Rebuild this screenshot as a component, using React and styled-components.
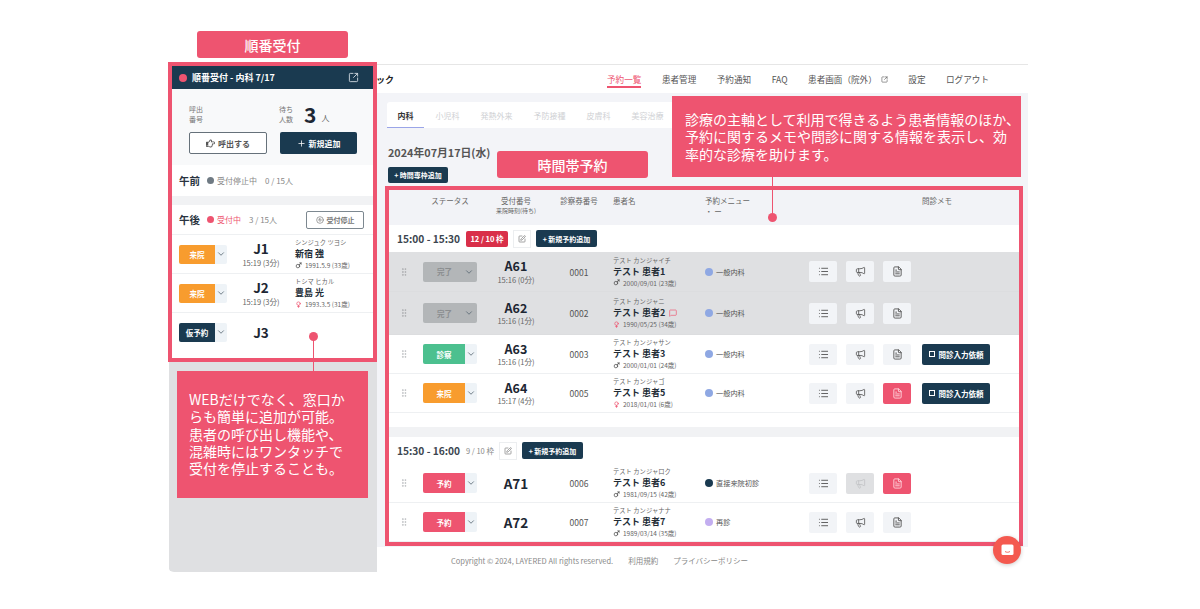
import styled, { createGlobalStyle } from "styled-components";
import {
  ChevronDown,
  CircleStop,
  FileText,
  GripVertical,
  List,
  Mars,
  Megaphone,
  MessageSquare,
  Plus,
  SquareArrowOutUpRight,
  SquarePen,
  Venus,
} from "lucide-react";
import { FaRegHandPointRight } from "react-icons/fa";

const PINK = "#ee5470";
const NAVY = "#1a3a50";

const navItems = ["予約一覧", "患者管理", "予約通知", "FAQ", "患者画面（院外）", "設定", "ログアウト"];
const tabs = ["内科", "小児科", "発熱外来", "予防接種", "皮膚科", "美容治療"];

const queue = [
  { status: "来院", color: "#f89c2e", no: "J1", time: "15:19 (3分)", kana: "シンジュク ツヨシ", name: "新宿 強", gender: "m", dob: "1991.5.9 (33歳)" },
  { status: "来院", color: "#f89c2e", no: "J2", time: "15:19 (3分)", kana: "トシマ ヒカル", name: "豊島 光", gender: "f", dob: "1993.3.5 (31歳)" },
  { status: "仮予約", color: NAVY, no: "J3" },
];

const firstSlot = [
  { status: "完了", done: true, no: "A61", time: "15:16 (0分)", card: "0001", kana: "テスト カンジャイチ", name: "テスト 患者1", gender: "m", dob: "2000/09/01 (23歳)", menu: "一般内科", dot: "#8fa8e3", h: 40 },
  { status: "完了", done: true, no: "A62", time: "15:16 (1分)", card: "0002", kana: "テスト カンジャニ", name: "テスト 患者2", note: true, gender: "f", dob: "1990/05/25 (34歳)", menu: "一般内科", dot: "#8fa8e3", h: 43 },
  { status: "診察", color: "#4cc08f", no: "A63", time: "15:16 (1分)", card: "0003", kana: "テスト カンジャサン", name: "テスト 患者3", gender: "m", dob: "2000/01/01 (24歳)", menu: "一般内科", dot: "#8fa8e3", ask: true, h: 39 },
  { status: "来院", color: "#f89c2e", no: "A64", time: "15:17 (4分)", card: "0005", kana: "テスト カンジャゴ", name: "テスト 患者5", gender: "f", dob: "2018/01/01 (6歳)", menu: "一般内科", dot: "#8fa8e3", ask: true, docOn: true, h: 39 },
];

const secondSlot = [
  { status: "予約", color: PINK, no: "A71", card: "0006", kana: "テスト カンジャロク", name: "テスト 患者6", gender: "m", dob: "1981/09/15 (42歳)", menu: "直接来院初診", dot: NAVY, docOn: true, callOff: true, h: 39 },
  { status: "予約", color: PINK, no: "A72", card: "0007", kana: "テスト カンジャナナ", name: "テスト 患者7", gender: "m", dob: "1989/03/14 (35歳)", menu: "再診", dot: "#c3aef0", h: 39 },
];

const Global = createGlobalStyle`
  * { box-sizing: border-box; }
  body {
    margin: 0;
    background: #fff;
    font-family: "Noto Sans CJK JP", "Noto Sans", sans-serif;
  }
`;

const Stage = styled.div`
  position: relative;
  width: 1200px;
  height: 609px;
  overflow: hidden;
  display: flex;
  align-items: flex-start;
  padding: 62px 0 0 168px;
`;

/* left column */
const SideColumn = styled.div`
  width: 209px;
  height: 510px;
  background: linear-gradient(to right, transparent 1px, #dfe0e2 1px);
  border-bottom-left-radius: 6px;
`;

const QueuePanel = styled.section`
  height: 300px;
  border: 4px solid ${PINK};
  background: #fff;
  overflow: hidden;
`;

const PanelHead = styled.header`
  height: 23px;
  background: ${NAVY};
  color: #fff;
  display: flex;
  align-items: center;
  padding: 0 14px 0 7px;
  font-size: 9px;
  font-weight: 700;
  gap: 5px;
  svg { margin-left: auto; color: #cfd8df; }
`;

const Dot = styled.i`
  display: inline-block;
  flex: none;
  width: ${(p) => p.$size || 7}px;
  height: ${(p) => p.$size || 7}px;
  border-radius: 50%;
  background: ${(p) => p.$color};
`;

const CallBox = styled.div`
  height: 76px;
  background: #f8f9fa;
  padding: 10px 16px 0 17px;
`;

const CallInfo = styled.div`
  display: flex;
  align-items: center;
  height: 30px;
`;

const SmallLabel = styled.div`
  width: ${(p) => p.$w}px;
  font-size: 7px;
  line-height: 10px;
  color: #777;
`;

const BigCount = styled.strong`
  font-size: 21px;
  line-height: 26px;
  color: #1d2733;
  margin-left: 1px;
  margin-right: 5px;
`;

const CountUnit = styled.span`
  font-size: 8px;
  color: #666;
  margin-top: 6px;
`;

const CallActions = styled.div`
  display: flex;
  justify-content: space-between;
  margin-top: 3px;
`;

const OutlineButton = styled.button`
  width: 78px;
  height: 22px;
  border: 1px solid #66717a;
  border-radius: 2px;
  background: #fff;
  color: #555;
  font: 700 8px "Noto Sans CJK JP", sans-serif;
  display: flex;
  align-items: center;
  justify-content: center;
  gap: 3px;
  padding: 0;
`;

const FillButton = styled(OutlineButton)`
  width: 77px;
  border: 0;
  background: ${NAVY};
  color: #fff;
`;

const SessionRow = styled.div`
  height: ${(p) => p.$h}px;
  display: flex;
  align-items: center;
  padding: 0 9px 0 7px;
  background: #fff;
  font-size: 8px;
  color: #888;
  gap: 3px;
`;

const SessionName = styled.strong`
  font-size: 10.5px;
  color: #2a3440;
  margin-right: 4px;
`;

const SessionState = styled.span`
  color: ${(p) => p.$color};
  margin-right: 5px;
`;

const Band = styled.div`
  height: ${(p) => p.$h}px;
  background: #f1f2f4;
`;

const StopButton = styled.button`
  margin-left: auto;
  width: 58px;
  height: 18px;
  border: 1px solid #7d8890;
  border-radius: 2px;
  background: #fff;
  color: #777;
  font: 700 7px "Noto Sans CJK JP", sans-serif;
  display: flex;
  align-items: center;
  justify-content: center;
  gap: 3px;
  padding: 0;
`;

const QueueRow = styled.div`
  height: ${(p) => p.$h || 39}px;
  display: flex;
  align-items: center;
  padding-left: 7px;
  border-top: 1px solid #eef0f2;
  background: #fff;
`;

const StatusGroup = styled.div`
  flex: none;
  width: ${(p) => p.$w}px;
  height: ${(p) => p.$hgt || 19}px;
  display: flex;
  border-radius: 2px;
  overflow: hidden;
  background: ${(p) => (p.$done ? "#b3b6b8" : "#eef3f7")};
`;

const StatusLabel = styled.span`
  flex: 1;
  display: flex;
  align-items: center;
  justify-content: center;
  background: ${(p) => p.$color || "transparent"};
  color: ${(p) => (p.$done ? "#8a8d8f" : "#fff")};
  font-size: 7.5px;
  font-weight: 700;
  padding-left: ${(p) => (p.$done ? "3px" : 0)};
`;

const StatusChevron = styled.span`
  flex: none;
  width: 12px;
  display: flex;
  align-items: center;
  justify-content: center;
  margin-right: ${(p) => (p.$done ? "2px" : 0)};
  color: #5c6a75;
`;

const QueueNumber = styled.div`
  width: 68px;
  flex: none;
  text-align: center;
`;

const NumberText = styled.div`
  font-size: ${(p) => p.$size}px;
  line-height: ${(p) => p.$size + 3}px;
  font-weight: 700;
  color: #1d2733;
`;

const TimeText = styled.div`
  font-size: 7.5px;
  line-height: 11px;
  color: #666;
`;

const Patient = styled.div`
  flex: none;
`;

const Kana = styled.div`
  font-size: 6.3px;
  line-height: 9px;
  color: #666;
  white-space: nowrap;
`;

const PatientName = styled.div`
  display: flex;
  align-items: center;
  gap: 4px;
  font-size: 9px;
  line-height: 13px;
  font-weight: 700;
  color: #222c36;
  white-space: nowrap;
`;

const Birth = styled.div`
  display: flex;
  align-items: center;
  gap: 3px;
  font-size: 6.5px;
  line-height: 10px;
  color: #666;
  white-space: nowrap;
`;

/* right column */
const AppColumn = styled.div`
  width: 651px;
  padding-top: 2px;
`;

const TopNav = styled.nav`
  height: 29px;
  border-top: 1px solid #e6e6e6;
  display: flex;
  align-items: center;
  font-size: 8.6px;
  color: #555;
  padding-right: 39px;
`;

const Brand = styled.strong`
  font-size: 9px;
  color: #222;
  margin: 0 auto 0 -1px;
`;

const NavItem = styled.span`
  height: 28px;
  display: flex;
  align-items: center;
  gap: 4px;
  margin-left: 20.5px;
  white-space: nowrap;
  color: ${(p) => (p.$active ? PINK : "#555")};
  box-shadow: ${(p) => (p.$active ? `inset 0 -5px 0 #fff, inset 0 -7px 0 ${PINK}` : "none")};
`;

const Workspace = styled.main`
  height: 454px;
  background: #f3f4f8;
  padding: 9px 5px 0 8px;
`;

const TabBar = styled.div`
  width: 330px;
  height: 26px;
  margin-left: 2px;
  background: #fff;
  border-radius: 3px;
  display: flex;
  font-size: 8px;
`;

const Tab = styled.span`
  flex: none;
  padding: 0 10.5px;
  display: flex;
  align-items: center;
  white-space: nowrap;
  font-weight: ${(p) => (p.$active ? 700 : 400)};
  color: ${(p) => (p.$active ? "#333" : "#cfd1d4")};
  box-shadow: ${(p) => (p.$active ? "inset 0 -1px 0 #9aa5e8" : "none")};
  margin-right: ${(p) => (p.$active ? "1px" : "0")};
`;

const DateTitle = styled.h2`
  margin: 15px 0 0 3px;
  height: 18px;
  font-size: 10.8px;
  line-height: 18px;
  font-weight: 700;
  color: #555;
`;

const AddSlotButton = styled.button`
  display: block;
  margin: 6px 0 3px 3px;
  width: 60px;
  height: 16px;
  border: 0;
  border-radius: 2px;
  background: ${NAVY};
  color: #fff;
  font: 700 7px "Noto Sans CJK JP", sans-serif;
  padding: 0;
`;

const ScheduleFrame = styled.section`
  width: 638px;
  height: 360px;
  border: 4px solid ${PINK};
  background: #fff;
  overflow: hidden;
`;

const TableHead = styled.div`
  height: 35px;
  background: #f2f3f7;
  display: flex;
  align-items: flex-start;
  padding-top: 5px;
  font-size: 7.5px;
  color: #666;
  line-height: 11px;
`;

const HeadCell = styled.div`
  flex: none;
  width: ${(p) => p.$w}px;
  text-align: ${(p) => p.$align || "center"};
  white-space: nowrap;
  small { display: block; font-size: 6px; line-height: 9px; }
`;

const SlotHead = styled.div`
  height: ${(p) => p.$h}px;
  display: flex;
  align-items: center;
  padding-left: 8px;
  background: #fff;
  gap: 5px;
`;

const SlotTime = styled.strong`
  font-size: 10.2px;
  color: #3c4650;
  width: 64px;
  white-space: nowrap;
`;

const FullBadge = styled.span`
  width: 42px;
  height: 16px;
  border-radius: 2px;
  background: #d92f49;
  color: #fff;
  font-size: 7.5px;
  font-weight: 700;
  display: flex;
  align-items: center;
  justify-content: center;
`;

const SlotCount = styled.span`
  width: 28px;
  font-size: 7.5px;
  color: #888;
  white-space: nowrap;
`;

const EditBox = styled.span`
  width: 18px;
  height: 18px;
  border: 1px solid #eceef0;
  background: #fff;
  color: #777;
  display: flex;
  align-items: center;
  justify-content: center;
`;

const AddPatientButton = styled(AddSlotButton)`
  margin: 0;
  width: 61px;
  height: 17px;
`;

const Row = styled.div`
  height: ${(p) => p.$h}px;
  display: flex;
  align-items: center;
  background: ${(p) => (p.$done ? "#dfe0e2" : "#fff")};
  border-bottom: 1px solid ${(p) => (p.$done ? "#dcdddf" : "#eef0f2")};
`;

const Handle = styled.span`
  flex: none;
  width: 34px;
  padding-left: 10px;
  color: ${(p) => (p.$done ? "#a9abad" : "#b9bcbf")};
  display: flex;
`;

const RowNumber = styled.div`
  flex: none;
  width: 78px;
  text-align: center;
`;

const CardNo = styled.div`
  flex: none;
  width: 48px;
  margin-right: 10px;
  text-align: center;
  font-size: 8.5px;
  color: #555;
`;

const PatientCell = styled.div`
  flex: none;
  width: 92px;
`;

const MenuCell = styled.div`
  flex: none;
  width: 104px;
  display: flex;
  align-items: center;
  gap: 3px;
  font-size: 7.2px;
  color: #555;
  white-space: nowrap;
`;

const Actions = styled.div`
  display: flex;
  align-items: center;
  gap: 9px;
`;

const ActionButton = styled.span`
  width: 28px;
  height: 21px;
  border-radius: 2px;
  display: flex;
  align-items: center;
  justify-content: center;
  background: ${(p) => (p.$on ? PINK : p.$off ? "#dfe0e2" : "#f2f4f7")};
  color: ${(p) => (p.$on ? "#ffd5dd" : p.$off ? "#c2c4c6" : "#555")};
`;

const AskButton = styled.span`
  width: 68px;
  height: 21px;
  margin-left: 2px;
  border-radius: 2px;
  background: ${NAVY};
  color: #fff;
  font-size: 7.5px;
  font-weight: 700;
  display: flex;
  align-items: center;
  justify-content: center;
  gap: 4px;
  white-space: nowrap;
`;

const AskCheck = styled.i`
  width: 6px;
  height: 6px;
  border: 1px solid #fff;
`;

const Footer = styled.footer`
  height: 26px;
  display: flex;
  align-items: center;
  padding-left: 74px;
  gap: 15px;
  font-size: 7.5px;
  color: #888;
  white-space: nowrap;
`;

/* annotations lying over the screen */
const TagLabel = styled.div`
  position: absolute;
  left: ${(p) => p.$x}px;
  top: ${(p) => p.$y}px;
  width: 151px;
  height: 27px;
  border-radius: 3px;
  background: ${PINK};
  color: #fff;
  font-size: 14px;
  font-weight: 500;
  display: flex;
  align-items: center;
  justify-content: center;
`;

const Callout = styled.div`
  position: absolute;
  background: ${PINK};
  color: #fff;
  white-space: nowrap;
  font-size: 14px;
  line-height: 17.3px;
`;

const TopCallout = styled(Callout)`
  left: 672px;
  top: 96px;
  width: 349px;
  height: 81px;
  padding: 15px 0 0 13px;
`;

const SideCallout = styled(Callout)`
  left: 177px;
  top: 371px;
  width: 191px;
  height: 127px;
  padding: 20px 0 0 12px;
`;

const Leader = styled.i`
  position: absolute;
  left: ${(p) => p.$x}px;
  top: ${(p) => p.$y}px;
  width: 1px;
  height: ${(p) => p.$h}px;
  background: ${PINK};
  &::after {
    content: "";
    position: absolute;
    left: -4px;
    ${(p) => (p.$dotEnd ? "bottom: -4px;" : "top: -4px;")}
    width: 9px;
    height: 9px;
    border-radius: 50%;
    background: ${PINK};
  }
`;

const ChatFab = styled.div`
  position: absolute;
  left: 993px;
  top: 536px;
  width: 28px;
  height: 28px;
  border-radius: 50%;
  background: #f4594f;
  box-shadow: 0 1px 4px rgba(0, 0, 0, 0.2);
  display: flex;
  align-items: center;
  justify-content: center;
`;

function Gender({ type }) {
  return type === "m" ? <Mars size={7} color="#444" strokeWidth={2.4} /> : <Venus size={7} color={PINK} strokeWidth={2.4} />;
}

function Status({ row, width, height }) {
  return (
    <StatusGroup $w={width} $hgt={height} $done={row.done}>
      <StatusLabel $color={row.color} $done={row.done}>{row.status}</StatusLabel>
      <StatusChevron $done={row.done}><ChevronDown size={10} strokeWidth={2} /></StatusChevron>
    </StatusGroup>
  );
}

function ScheduleRow({ row }) {
  return (
    <Row $h={row.h} $done={row.done}>
      <Handle $done={row.done}><GripVertical size={10} /></Handle>
      <Status row={row} width={54} height={20} />
      <RowNumber>
        <NumberText $size={row.time ? 12.5 : 13.5}>{row.no}</NumberText>
        {row.time && <TimeText>{row.time}</TimeText>}
      </RowNumber>
      <CardNo>{row.card}</CardNo>
      <PatientCell>
        <Kana>{row.kana}</Kana>
        <PatientName>
          {row.name}
          {row.note && <MessageSquare size={8} color={PINK} />}
        </PatientName>
        <Birth><Gender type={row.gender} />{row.dob}</Birth>
      </PatientCell>
      <MenuCell><Dot $color={row.dot} $size={8} />{row.menu}</MenuCell>
      <Actions>
        <ActionButton><List size={11} strokeWidth={2} /></ActionButton>
        <ActionButton $off={row.callOff}><Megaphone size={11} strokeWidth={1.8} /></ActionButton>
        <ActionButton $on={row.docOn}><FileText size={11} strokeWidth={2} /></ActionButton>
        {row.ask && <AskButton><AskCheck />問診入力依頼</AskButton>}
      </Actions>
    </Row>
  );
}

export default function App() {
  return (
    <Stage>
      <Global />
      <SideColumn>
        <QueuePanel>
          <PanelHead>
            <Dot $color="#ee5470" $size={8} />
            順番受付 - 内科 7/17
            <SquareArrowOutUpRight size={11} />
          </PanelHead>
          <CallBox>
            <CallInfo>
              <SmallLabel $w={90}>呼出<br />番号</SmallLabel>
              <SmallLabel $w={24}>待ち<br />人数</SmallLabel>
              <BigCount>3</BigCount>
              <CountUnit>人</CountUnit>
            </CallInfo>
            <CallActions>
              <OutlineButton><FaRegHandPointRight size={9} />呼出する</OutlineButton>
              <FillButton><Plus size={9} />新規追加</FillButton>
            </CallActions>
          </CallBox>
          <SessionRow $h={31}>
            <SessionName>午前</SessionName>
            <Dot $color="#6f7a83" />
            <SessionState $color="#888">受付停止中</SessionState>
            0 / 15人
          </SessionRow>
          <Band $h={9} />
          <SessionRow $h={29}>
            <SessionName>午後</SessionName>
            <Dot $color={PINK} />
            <SessionState $color={PINK}>受付中</SessionState>
            3 / 15人
            <StopButton><CircleStop size={8} />受付停止</StopButton>
          </SessionRow>
          {queue.map((item) => (
            <QueueRow key={item.no}>
              <Status row={item} width={48} />
              <QueueNumber>
                <NumberText $size={13.5}>{item.no}</NumberText>
                {item.time && <TimeText>{item.time}</TimeText>}
              </QueueNumber>
              {item.kana && (
                <Patient>
                  <Kana>{item.kana}</Kana>
                  <PatientName>{item.name}</PatientName>
                  <Birth><Gender type={item.gender} />{item.dob}</Birth>
                </Patient>
              )}
            </QueueRow>
          ))}
        </QueuePanel>
      </SideColumn>

      <AppColumn>
        <TopNav>
          <Brand>ック</Brand>
          {navItems.map((item, i) => (
            <NavItem key={item} $active={i === 0}>
              {item}
              {item.startsWith("患者画面") && <SquareArrowOutUpRight size={7} />}
            </NavItem>
          ))}
        </TopNav>
        <Workspace>
          <TabBar>
            {tabs.map((tab, i) => (
              <Tab key={tab} $active={i === 0}>{tab}</Tab>
            ))}
          </TabBar>
          <DateTitle>2024年07月17日(水)</DateTitle>
          <AddSlotButton>+ 時間専枠追加</AddSlotButton>
          <ScheduleFrame>
            <TableHead>
              <HeadCell $w={34} />
              <HeadCell $w={54}>ステータス</HeadCell>
              <HeadCell $w={78}>受付番号<small>来院時刻(待ち)</small></HeadCell>
              <HeadCell $w={48}>診察券番号</HeadCell>
              <HeadCell $w={10} />
              <HeadCell $w={92} $align="left">患者名</HeadCell>
              <HeadCell $w={217} $align="left">予約メニュー<br />・ ー</HeadCell>
              <HeadCell $w={40} $align="left">問診メモ</HeadCell>
            </TableHead>
            <SlotHead $h={27}>
              <SlotTime>15:00 - 15:30</SlotTime>
              <FullBadge>12 / 10 枠</FullBadge>
              <EditBox><SquarePen size={8} /></EditBox>
              <AddPatientButton>+ 新規予約追加</AddPatientButton>
            </SlotHead>
            {firstSlot.map((row) => <ScheduleRow key={row.no} row={row} />)}
            <SlotHead $h={14} />
            <Band $h={10} />
            <SlotHead $h={27}>
              <SlotTime>15:30 - 16:00</SlotTime>
              <SlotCount>9 / 10 枠</SlotCount>
              <EditBox><SquarePen size={8} /></EditBox>
              <AddPatientButton>+ 新規予約追加</AddPatientButton>
            </SlotHead>
            {secondSlot.map((row) => <ScheduleRow key={row.no} row={row} />)}
          </ScheduleFrame>
        </Workspace>
        <Footer>
          <span>Copyright © 2024, LAYERED All rights reserved.</span>
          <span>利用規約</span>
          <span>プライバシーポリシー</span>
        </Footer>
      </AppColumn>

      <TagLabel $x={197} $y={31}>順番受付</TagLabel>
      <TagLabel $x={497} $y={151}>時間帯予約</TagLabel>
      <TopCallout>
        診療の主軸として利用で得きるよう患者情報のほか、<br />
        予約に関するメモや問診に関する情報を表示し、効<br />
        率的な診療を助けます。
      </TopCallout>
      <Leader $x={772} $y={177} $h={41} $dotEnd />
      <SideCallout>
        WEBだけでなく、窓口か<br />
        らも簡単に追加が可能。<br />
        患者の呼び出し機能や、<br />
        混雑時にはワンタッチで<br />
        受付を停止することも。
      </SideCallout>
      <Leader $x={313} $y={336} $h={35} />
      <ChatFab>
        <svg width="13" height="12" viewBox="0 0 13 12">
          <rect x="0.5" y="0.5" width="12" height="10.5" rx="1.5" fill="#fff" />
          <path d="M4 7.5c1.4 1 3.6 1 5 0" fill="none" stroke="#f4594f" strokeWidth="0.9" />
        </svg>
      </ChatFab>
    </Stage>
  );
}
